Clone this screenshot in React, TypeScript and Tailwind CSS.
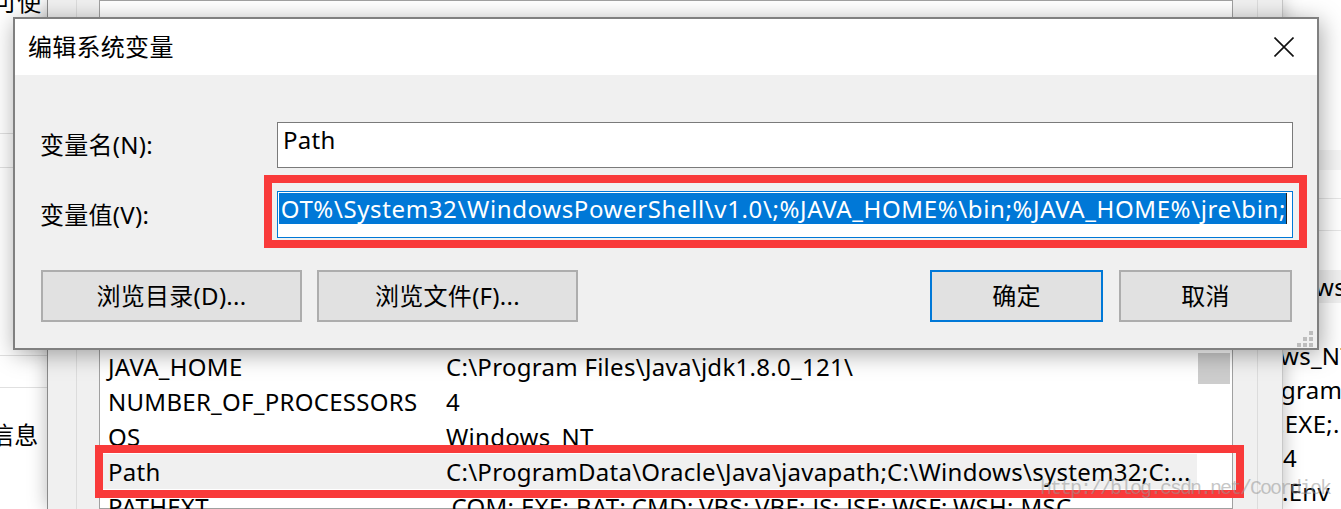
export default function App() {
  const rows = [
    { name: "JAVA_HOME", value: "C:\\Program Files\\Java\\jdk1.8.0_121\\" },
    { name: "NUMBER_OF_PROCESSORS", value: "4" },
    { name: "OS", value: "Windows_NT" },
    { name: "Path", value: "C:\\ProgramData\\Oracle\\Java\\javapath;C:\\Windows\\system32;C:...", sel: true },
    { name: "PATHEXT", value: ".COM;.EXE;.BAT;.CMD;.VBS;.VBE;.JS;.JSE;.WSF;.WSH;.MSC" },
  ];
  const pathValue =
    "C:\\Windows\\system32;C:\\Windows;C:\\Windows\\System32\\Wbem;%SYSTEMROOT%\\System32\\WindowsPowerShell\\v1.0\\;%JAVA_HOME%\\bin;%JAVA_HOME%\\jre\\bin;";

  return (
    <div className="relative w-[1341px] h-[509px] overflow-hidden bg-white text-black text-[24px] tracking-[0.28px] font-['Noto_Sans','Noto_Sans_CJK_SC',sans-serif]">
      {/* left background window */}
      <div className="absolute left-0 top-0 w-[60px] h-[509px] bg-white flex flex-col overflow-hidden">
        <div className="-mt-[10px] -ml-[7px] leading-[24px] whitespace-nowrap">可使</div>
        <div className="mt-[119px] h-px bg-[#e0e0e0]" />
        <div className="mt-[33px] h-px bg-[#e0e0e0]" />
        <div className="mt-[187px] h-px bg-[#e0e0e0]" />
        <div className="mt-[31px] h-px bg-[#e0e0e0]" />
        <div className="mt-[35px] -ml-[10px] leading-[24px] whitespace-nowrap">信息</div>
      </div>

      {/* right background window */}
      <div className="absolute left-[1282px] top-0 w-[80px] h-[509px] bg-white flex flex-col overflow-hidden">
        <div className="mt-[150px] h-[44px] bg-[#f5f5f5]" />
        <div className="mt-[28px] h-px bg-[#e6e6e6]" />
        <div className="mt-[31px] h-px bg-[#e6e6e6]" />
        <div className="mt-[40px] h-[33px] bg-[#f0f0f0] flex items-center pl-[33px] leading-[33px] whitespace-nowrap">ws</div>
        <div className="mt-[36px] flex flex-col leading-[34px] whitespace-nowrap">
          <div className="h-[34px] -ml-[2px]">ws_NT</div>
          <div className="h-[34px] -ml-[1px]">gramData</div>
          <div className="h-[34px] -ml-[4px]">.EXE;.BAT</div>
          <div className="h-[34px] ml-[1px]">4</div>
          <div className="h-[34px]">.Env</div>
        </div>
      </div>

      {/* middle background window (environment variables) */}
      <div className="absolute left-[47px] top-0 w-[1236px] h-[509px] bg-[#f0f0f0] border-l border-r border-l-[#8a8a8a] border-r-[#c8c8c8] flex shadow-[0_0_18px_rgba(0,0,0,0.28)]">
        <div className="w-[28px] shrink-0" />
        <div className="flex border-l border-r border-[#dcdcdc] pl-[22px] pr-[24px]">
          <div className="w-[1134px] h-full bg-white border border-[#a0a0a0] flex">
            <div className="flex-1 pt-[348px] flex flex-col">
              {rows.map((r) => (
                <div
                  key={r.name}
                  className={`h-[35px] ml-[3px] mr-[1px] px-[5px] flex items-center leading-[35px] whitespace-nowrap shrink-0 ${r.sel ? "bg-[#f0f0f0]" : ""}`}
                >
                  <div className="w-[338px] shrink-0">{r.name}</div>
                  <div>{r.value}</div>
                </div>
              ))}
            </div>
            <div className="w-[32px] mr-[2px] pt-[352px]">
              <div className="h-[31px] bg-[#cdcdcd]" />
            </div>
          </div>
        </div>
        <div className="w-[24px] shrink-0" />
      </div>

      {/* main dialog */}
      <div className="absolute left-[13px] top-[17px] w-[1306px] h-[333px] border-2 border-[#808080] bg-[#f0f0f0] flex flex-col shadow-[2px_4px_22px_rgba(0,0,0,0.35)]">
        <div className="h-[56px] shrink-0 bg-white flex items-center justify-between pl-[13px] pr-[23px]">
          <div className="leading-[32px]">编辑系统变量</div>
          <svg width="20" height="20" viewBox="0 0 20 20">
            <path d="M0.5 0.5 L19.5 19.5 M19.5 0.5 L0.5 19.5" stroke="#111" strokeWidth="1.6" fill="none" />
          </svg>
        </div>
        <div className="relative flex-1 flex flex-col pl-[25px] pr-[24px] pt-[47px]">
          <div className="flex items-center h-[46px]">
            <div className="w-[237px] shrink-0 leading-[32px]">变量名(N):</div>
            <div className="flex-1 h-[46px] bg-white border border-[#7a7a7a] pl-[5px] pt-[1px] leading-[32px]">Path</div>
          </div>
          <div className="mt-[23px] flex items-center h-[47px]">
            <div className="w-[237px] shrink-0 leading-[32px]">变量值(V):</div>
            <div className="flex-1 min-w-0 h-[47px] bg-white border border-[#0078d7] pl-[1px] pt-[1px] pr-[5px]">
              <div className="flex justify-end overflow-hidden h-[31px]">
                <span className="inline-block shrink-0 whitespace-nowrap leading-[31px] h-[31px] bg-[#0078d7] text-white tracking-[0.62px]">{pathValue}</span>
                <span className="inline-block shrink-0 w-px h-[31px] bg-[#222]" />
              </div>
            </div>
          </div>
          <div className="mt-[32px] flex h-[52px] ml-[1px] mr-[1px]">
            <div className="w-[261px] h-[52px] bg-[#e1e1e1] border-2 border-[#adadad] flex items-center justify-center leading-[32px]">浏览目录(D)...</div>
            <div className="ml-[15px] w-[261px] h-[52px] bg-[#e1e1e1] border-2 border-[#adadad] flex items-center justify-center leading-[32px]">浏览文件(F)...</div>
            <div className="ml-auto w-[173px] h-[52px] bg-[#e1e1e1] border-2 border-[#0078d7] flex items-center justify-center leading-[32px]">确定</div>
            <div className="ml-[16px] w-[173px] h-[52px] bg-[#e1e1e1] border-2 border-[#adadad] flex items-center justify-center leading-[32px]">取消</div>
          </div>
          <svg className="absolute right-[4px] bottom-[1px]" width="16" height="16" viewBox="0 0 16 16">
            <rect x="12" y="0" width="4" height="4" fill="#bdbdbd" />
            <rect x="6" y="6" width="4" height="4" fill="#bdbdbd" />
            <rect x="12" y="6" width="4" height="4" fill="#bdbdbd" />
            <rect x="0" y="12" width="4" height="4" fill="#bdbdbd" />
            <rect x="6" y="12" width="4" height="4" fill="#bdbdbd" />
            <rect x="12" y="12" width="4" height="4" fill="#bdbdbd" />
          </svg>
        </div>
      </div>

      {/* red annotation boxes */}
      <div className="absolute left-[264px] top-[175px] w-[1043px] h-[73px] border-[8px] border-[#f93a3a]" />
      <div className="absolute left-[95px] top-[445px] w-[1149px] h-[53px] border-[8px] border-[#f93a3a]" />

      {/* watermark */}
      <div className="absolute left-[1040px] top-[479px] text-[20px] leading-[20px] tracking-[-2px] whitespace-nowrap text-[rgba(150,150,150,0.55)] font-['Liberation_Mono',monospace]">
        http://blog.csdn.net/Coordiok
      </div>
    </div>
  );
}
